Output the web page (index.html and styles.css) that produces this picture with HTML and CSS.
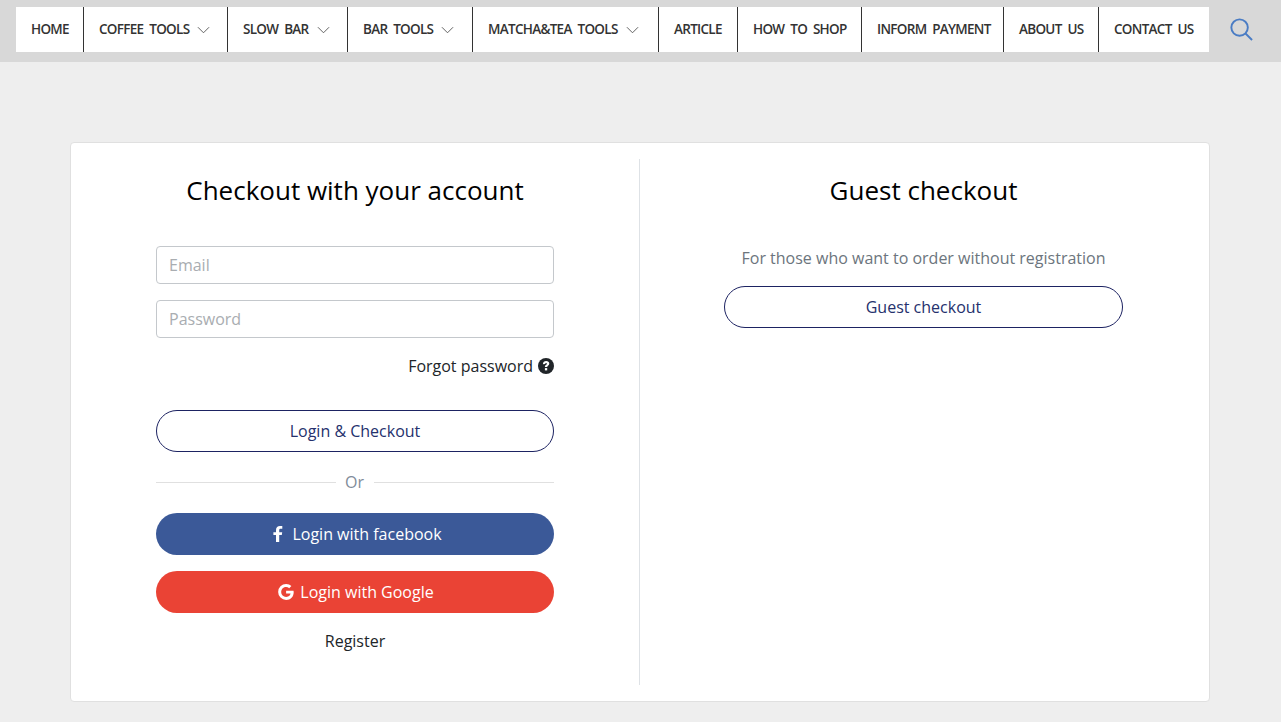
FILE: index.html
```html
<!DOCTYPE html>
<html lang="en">
<head>
<meta charset="utf-8">
<title>Checkout</title>
<link rel="stylesheet" href="styles.css">
</head>
<body>
<header class="topbar">
  <nav class="nav">
    <a class="nav-item">HOME</a>
    <a class="nav-item">COFFEE TOOLS<svg class="caret" viewBox="0 0 14 8"><path d="M1 1l6 6 6-6"/></svg></a>
    <a class="nav-item">SLOW BAR<svg class="caret" viewBox="0 0 14 8"><path d="M1 1l6 6 6-6"/></svg></a>
    <a class="nav-item">BAR TOOLS<svg class="caret" viewBox="0 0 14 8"><path d="M1 1l6 6 6-6"/></svg></a>
    <a class="nav-item">MATCHA&amp;TEA TOOLS<svg class="caret" viewBox="0 0 14 8"><path d="M1 1l6 6 6-6"/></svg></a>
    <a class="nav-item">ARTICLE</a>
    <a class="nav-item">HOW TO SHOP</a>
    <a class="nav-item">INFORM PAYMENT</a>
    <a class="nav-item">ABOUT US</a>
    <a class="nav-item">CONTACT US</a>
  </nav>
  <svg class="search" viewBox="0 0 24 24"><circle cx="10" cy="10" r="8.6"/><path d="M16.2 16.2L23 23"/></svg>
</header>
<main class="page">
  <section class="card">
    <div class="col col-left">
      <h2 class="title">Checkout with your account</h2>
      <form class="form">
        <input class="field" type="text" placeholder="Email">
        <input class="field" type="password" placeholder="Password">
        <a class="forgot">Forgot password
          <svg class="help" viewBox="0 0 16 16"><circle cx="8" cy="8" r="8" fill="#212529"/><path d="M4.900 6.200C5 4.200 6.300 3 8.200 3c1.800 0 3.100 1.100 3.100 2.600 0 2.100-2.100 2.100-2.100 3.500H6.900c0-2.500 2-2.300 2-3.400 0-.5-.3-.8-.8-.8-.6 0-.9.400-1 1.100z" fill="#fff"/><rect x="6.900" y="10.100" width="2.300" height="2.300" fill="#fff"/></svg>
        </a>
        <button class="btn btn-outline btn-login" type="button">Login &amp; Checkout</button>
        <div class="or"><span>Or</span></div>
        <button class="btn btn-fb" type="button"><svg class="fb-icon" viewBox="0 0 10 16"><path d="M3 16V9H.4V6.2H3V4.1C3 1.4 4.6 0 7 0c1.100 0 2 .1 2.300.1v2.700H7.700C6.400 2.800 6.200 3.400 6.200 4.300v1.900h3l-.4 2.800H6.200v7z" fill="#fff"/></svg>Login with facebook</button>
        <button class="btn btn-google" type="button"><svg class="g-icon" viewBox="0 0 16 16"><path d="M15.700 8.200c0 4.500-3.100 7.700-7.600 7.700A7.900 7.900 0 1 1 8.100 0c2.100 0 3.900.8 5.300 2.100l-2.200 2.100C8.400 1.500 3.200 3.500 3.200 8c0 2.700 2.200 4.900 4.900 4.900 3.100 0 4.300-2.200 4.500-3.400H8.100V6.800h7.400c.1.400.2.800.2 1.400z" fill="#fff"/></svg>Login with Google</button>
        <a class="register">Register</a>
      </form>
    </div>
    <div class="col col-right">
      <h2 class="title">Guest checkout</h2>
      <p class="note">For those who want to order without registration</p>
      <button class="btn btn-outline btn-guest" type="button">Guest checkout</button>
    </div>
  </section>
</main>
</body>
</html>
```

FILE: styles.css
```css
* { box-sizing: border-box; }
html, body { margin: 0; padding: 0; }
body {
  background: #eeeeee;
  color: #212529;
  font-family: "Open Sans", sans-serif;
  font-size: 16px;
  height: 722px;
  overflow: hidden;
}
.topbar {
  height: 62px;
  background: #d8d8d8;
  padding: 7px 0 0 16px;
  display: flex;
  align-items: flex-start;
}
.nav {
  display: flex;
  width: 1193px;
  height: 45px;
  background: #fff;
}
.nav-item {
  display: flex;
  align-items: center;
  justify-content: flex-start;
  flex: none;
  height: 45px;
  padding: 0 0 2px 15px;
  border-left: 1px solid #333;
  color: #333;
  font-size: 13.5px;
  font-weight: 600;
  letter-spacing: -0.7px;
  word-spacing: 3px;
  white-space: nowrap;
}
.nav-item:nth-child(1) { width: 67px; border-left: 0; }
.nav-item:nth-child(2) { width: 144px; }
.nav-item:nth-child(3) { width: 120px; }
.nav-item:nth-child(4) { width: 125px; }
.nav-item:nth-child(5) { width: 186px; }
.nav-item:nth-child(6) { width: 79px; }
.nav-item:nth-child(7) { width: 124px; }
.nav-item:nth-child(8) { width: 142px; }
.nav-item:nth-child(9) { width: 95px; }
.nav-item:nth-child(10) { width: 111px; }
.caret {
  flex: none;
  width: 13px;
  height: 8px;
  margin: 2px 0 0 8px;
  fill: none;
  stroke: #555;
  stroke-width: 1;
}
.search {
  width: 23px;
  height: 23px;
  margin: 11px 0 0 21px;
  fill: none;
  stroke: #4a7cc4;
  stroke-width: 2;
}
.page {
  padding: 80px 71px 0 70px;
}
.card {
  display: flex;
  height: 560px;
  padding: 16px 0;
  background: #fff;
  border: 1px solid #e0e0e0;
  border-radius: 4px;
}
.col { display: flex; flex-direction: column; align-items: center; }
.col-left { width: 569px; border-right: 1px solid #dee2e6; }
.col-right { flex: 1; padding-right: 2px; }
.title {
  margin: 13px 0 0;
  height: 36px;
  font-size: 26px;
  font-weight: 400;
  line-height: 36px;
  color: #000;
}
.form { width: 398px; margin-top: 38px; display: flex; flex-direction: column; }
.field {
  width: 100%;
  height: 38px;
  margin-bottom: 16px;
  padding: 0 12px;
  background: #fff;
  border: 1px solid #c4c8cc;
  border-radius: 4px;
  font-family: inherit;
  font-size: 16px;
  color: #495057;
}
.field::placeholder { color: #a9adb1; opacity: 1; }
.forgot {
  display: flex;
  justify-content: flex-end;
  align-items: center;
  gap: 5px;
  height: 24px;
  line-height: 24px;
  color: #212529;
}
.help { width: 16px; height: 16px; }
.btn {
  display: flex;
  align-items: center;
  justify-content: center;
  width: 398px;
  height: 42px;
  padding: 0;
  border-radius: 21px;
  font-family: inherit;
  font-size: 16px;
  color: #fff;
  border: 0;
}
.btn-outline { background: #fff; border: 1px solid #1d2362; color: #25316d; }
.btn-login { margin-top: 32px; }
.or {
  display: flex;
  align-items: center;
  height: 24px;
  margin: 18px 0 19px;
  color: #7f8c9a;
}
.or::before, .or::after { content: ""; flex: 1; height: 1px; background: #e0e0e0; }
.or span { padding: 0 10px 0 9px; }
.btn-fb { background: #3b5998; margin-bottom: 16px; padding-left: 5px; }
.btn-google { background: #ea4335; padding-left: 2px; }
.fb-icon { width: 10px; height: 16px; margin-right: 9px; }
.g-icon { width: 16px; height: 16px; margin-right: 6px; }
.register { margin-top: 16px; text-align: center; line-height: 24px; color: #212529; }
.note { margin: 38px 0 16px; height: 24px; line-height: 24px; color: #6c757d; }
.btn-guest { width: 399px; }
```
